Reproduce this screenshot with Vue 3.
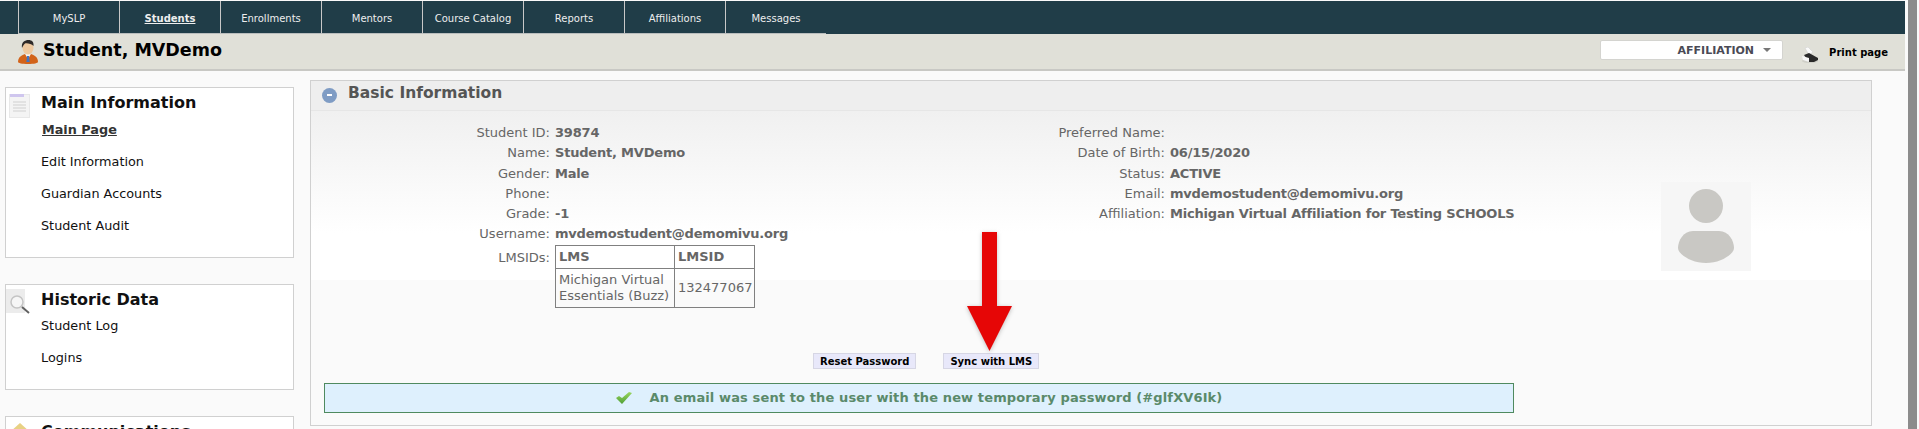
<template>
  <div class="shell">
    <div class="page">
      <nav class="topnav">
        <ul class="tabs">
          <li v-for="tab in tabs" :key="tab" class="tab" :class="{ current: tab === 'Students' }">{{ tab }}</li>
        </ul>
      </nav>

      <header class="titlebar">
        <svg class="user-icon" width="22" height="24" viewBox="0 0 22 24">
          <path d="M1 22c0-5 4-7 7-8h6c3 1 7 3 7 8 0 1-4 2-10 2S1 23 1 22z" fill="#d2631a" />
          <path d="M8 14h6l-3 5z" fill="#f4f4f4" />
          <path d="M10 16h2l.6 6h-3.200z" fill="#3f74c4" />
          <ellipse cx="11" cy="8" rx="5.500" ry="6.500" fill="#eec9a0" />
          <path d="M5 8C4 2 8 0 11.500 0S17 2 16.500 6c-2-2-6-3-8.500-2.500C7 4 6 6 5 8z" fill="#2e2a28" />
        </svg>
        <h1 class="student-name">Student, MVDemo</h1>
        <div class="affiliation-select">
          <span>AFFILIATION</span>
          <i class="caret"></i>
        </div>
        <svg class="print-icon" width="18" height="16" viewBox="0 0 18 16">
          <ellipse cx="9" cy="14" rx="8" ry="2" fill="#cfcfc8" />
          <path d="M4 1l3-1 5 5-4 3z" fill="#fafafa" stroke="#cccccc" stroke-width=".5" />
          <path d="M3 8l5-2 9 5v2l-4 2H8z" fill="#2a2a2a" />
          <path d="M1 9l7 2v4l-6-2z" fill="#f6f6f6" />
        </svg>
        <span class="print-label">Print page</span>
      </header>

      <div class="content">
        <aside class="sidebar">
          <section class="side-box main-box">
            <svg class="side-icon doc" width="21" height="24" viewBox="0 0 21 24">
              <rect x=".5" y=".5" width="20" height="23" fill="#f4f4f4" stroke="#e8e8e8" />
              <rect x="1" y="0" width="14" height="3" fill="#cfc6ee" />
              <path d="M4 8h13M4 11h13M4 14h13M4 17h13" stroke="#dcdcdc" stroke-width="1.500" />
            </svg>
            <h2>Main Information</h2>
            <a class="side-link active">Main Page</a>
            <a class="side-link">Edit Information</a>
            <a class="side-link">Guardian Accounts</a>
            <a class="side-link">Student Audit</a>
          </section>

          <section class="side-box history-box">
            <svg class="side-icon mag" width="25" height="25" viewBox="0 0 25 25">
              <rect x="0" y="0" width="19" height="24" fill="#ececec" />
              <circle cx="11" cy="13" r="6" fill="#f6f6f6" stroke="#c4c4c4" stroke-width="1.500" />
              <path d="M16 18l7 6" stroke="#606060" stroke-width="2" />
            </svg>
            <h2>Historic Data</h2>
            <a class="side-link">Student Log</a>
            <a class="side-link">Logins</a>
          </section>

          <section class="side-box comm-box">
            <svg class="side-icon env" width="22" height="18" viewBox="0 0 22 18">
              <path d="M1 10L11 1l10 9v8H1z" fill="#e8d184" />
            </svg>
            <h2>Communications</h2>
          </section>
        </aside>

        <main class="panel">
          <div class="panel-head">
            <span class="collapse"><b></b></span>
            <h3>Basic Information</h3>
          </div>

          <div class="info">
            <dl class="col">
              <template v-for="row in leftRows" :key="row.label">
                <dt>{{ row.label }}:</dt>
                <dd>{{ row.value }}</dd>
              </template>
              <dt class="lms-label">LMSIDs:</dt>
              <dd>
                <table class="lms">
                  <colgroup>
                    <col class="lms-name" />
                    <col class="lms-id" />
                  </colgroup>
                  <tr><th>LMS</th><th>LMSID</th></tr>
                  <tr><td>Michigan Virtual<br />Essentials (Buzz)</td><td>132477067</td></tr>
                </table>
              </dd>
            </dl>
            <dl class="col right">
              <template v-for="row in rightRows" :key="row.label">
                <dt>{{ row.label }}:</dt>
                <dd>{{ row.value }}</dd>
              </template>
            </dl>
            <div class="avatar">
              <svg width="90" height="89" viewBox="0 0 90 89">
                <circle cx="45" cy="24" r="17" fill="#c9c8c4" />
                <path d="M32 49h26c10 0 15 10 15 17 0 6-13 15-28 15S17 72 17 66c0-7 5-17 15-17z" fill="#c9c8c4" />
              </svg>
            </div>
          </div>

          <div class="actions">
            <button class="btn">Reset Password</button>
            <button class="btn">Sync with LMS</button>
          </div>

          <div class="notice">
            <svg width="16" height="13" viewBox="0 0 16 13">
              <defs>
                <linearGradient id="check-fill" x1="0" y1="0" x2="0" y2="1">
                  <stop offset="0" stop-color="#9ad65e" />
                  <stop offset="1" stop-color="#4f9f36" />
                </linearGradient>
              </defs>
              <path d="M0 7l3-2 3 2 7-6 3 1-10 11z" fill="url(#check-fill)" />
            </svg>
            <span>An email was sent to the user with the new temporary password (#glfXV6Ik)</span>
          </div>

          <svg class="arrow" width="47" height="122" viewBox="0 0 47 122">
            <path d="M15 0h15v74h15L22.500 119 0 74h15z" fill="#e60606" />
          </svg>
        </main>
      </div>
    </div>
    <div class="scrollbar"></div>
  </div>
</template>

<script setup>
const tabs = ['MySLP', 'Students', 'Enrollments', 'Mentors', 'Course Catalog', 'Reports', 'Affiliations', 'Messages']

const leftRows = [
  { label: 'Student ID', value: '39874' },
  { label: 'Name', value: 'Student, MVDemo' },
  { label: 'Gender', value: 'Male' },
  { label: 'Phone', value: '' },
  { label: 'Grade', value: '-1' },
  { label: 'Username', value: 'mvdemostudent@demomivu.org' }
]

const rightRows = [
  { label: 'Preferred Name', value: '' },
  { label: 'Date of Birth', value: '06/15/2020' },
  { label: 'Status', value: 'ACTIVE' },
  { label: 'Email', value: 'mvdemostudent@demomivu.org' },
  { label: 'Affiliation', value: 'Michigan Virtual Affiliation for Testing SCHOOLS' }
]
</script>

<style>
html, body {
  margin: 0;
  height: 429px;
  overflow: hidden;
  background: #fafafa;
}
</style>

<style scoped>
.shell {
  display: flex;
  height: 429px;
  overflow: hidden;
  font-family: "DejaVu Sans", Verdana, sans-serif;
  font-size: 12px;
}

.page {
  width: 1908px;
  flex: none;
}

.scrollbar {
  width: 9px;
  flex: none;
  background: #8c8c8c;
}

.topnav {
  width: 1905px;
  height: 33px;
  margin-top: 1px;
  background: #203d48;
}

.tabs {
  display: flex;
  margin: 0;
  padding: 0 0 0 18px;
  list-style: none;
}

.tab {
  width: 100px;
  height: 32px;
  border-left: 1px solid #c8c8c8;
  border-bottom: 1px solid #b9bdbd;
  color: #eee;
  font-size: 10px;
  line-height: 35px;
  text-align: center;
}

.tab.current {
  font-weight: bold;
  text-decoration: underline;
}

.titlebar {
  display: flex;
  align-items: center;
  width: 1905px;
  height: 37px;
  padding-left: 17px;
  box-sizing: border-box;
  background: #e0e0d8;
  border-bottom: 2px solid #c8c8c4;
}

.user-icon {
  flex: none;
}

.student-name {
  margin: 0 0 4px 4px;
  font-size: 17.500px;
  font-weight: bold;
  color: #000;
}

.affiliation-select {
  display: flex;
  align-items: center;
  justify-content: flex-end;
  width: 183px;
  height: 20px;
  margin: 0 0 3px auto;
  padding-right: 11px;
  box-sizing: border-box;
  background: #fff;
  border: 1px solid #d4d4d0;
  border-radius: 2px;
  color: #4a4a55;
  font-size: 11px;
  font-weight: bold;
}

.caret {
  width: 0;
  height: 0;
  margin-left: 9px;
  border-left: 4px solid transparent;
  border-right: 4px solid transparent;
  border-top: 4px solid #777;
}

.print-icon {
  flex: none;
  margin: 6px 0 0 18px;
}

.print-label {
  margin: 1px 17px 0 10px;
  font-size: 10px;
  font-weight: bold;
  color: #000;
}

.content {
  display: flex;
  align-items: flex-start;
}

.sidebar {
  width: 289px;
  flex: none;
  margin: 16px 0 0 5px;
}

.side-box {
  position: relative;
  box-sizing: border-box;
  padding-left: 35px;
  background: #fff;
  border: 1px solid #d0d0d0;
  margin-bottom: 26px;
}

.main-box {
  height: 171px;
}

.history-box {
  height: 106px;
}

.comm-box {
  height: 60px;
}

.side-box h2 {
  margin: 0;
  font-size: 16px;
  line-height: 24px;
  padding-top: 3px;
  color: #111;
}

.history-box h2 {
  padding-top: 4px;
  line-height: 22px;
  margin-bottom: -1px;
}

.side-link {
  display: block;
  height: 32px;
  line-height: 32px;
  font-size: 12.800px;
  color: #111;
}

.side-link.active {
  height: 24px;
  line-height: 24px;
  margin: 3px 0 4px 1px;
  font-weight: bold;
  text-decoration: underline;
  color: #333;
}

.side-icon {
  position: absolute;
}

.side-icon.doc {
  left: 3px;
  top: 6px;
}

.side-icon.mag {
  left: 0;
  top: 4px;
}

.side-icon.env {
  left: 3px;
  top: 5px;
}

.panel {
  position: relative;
  width: 1562px;
  height: 346px;
  flex: none;
  box-sizing: border-box;
  margin: 9px 0 0 16px;
  border: 1px solid #d0d0d0;
  color: #666;
}

.panel-head {
  display: flex;
  align-items: center;
  height: 29px;
  background: #eee;
  border-bottom: 1px solid #e6e6e6;
}

.collapse {
  display: flex;
  align-items: center;
  justify-content: center;
  width: 15px;
  height: 15px;
  margin: 0 0 1px 11px;
  border-radius: 50%;
  background: #7f9cc4;
}

.collapse b {
  width: 5px;
  height: 2px;
  background: #fff;
}

.panel-head h3 {
  margin: 0 0 6px 11px;
  font-size: 15.500px;
  font-weight: bold;
  color: #555;
}

.info {
  display: flex;
  height: 169px;
  padding-top: 14px;
  box-sizing: border-box;
  background: linear-gradient(#f0f0f0, #fff 72%);
  font-size: 13px;
}

.col {
  display: grid;
  grid-template-columns: 239px 1fr;
  grid-auto-rows: 20.300px;
  align-content: start;
  column-gap: 5px;
  width: 615px;
  margin: 0;
}

.col.right {
  width: 735px;
}

.col dt {
  text-align: right;
}

.col dd {
  margin: 0;
  font-weight: bold;
  letter-spacing: -0.2px;
}

.col dt.lms-label {
  padding-top: 3px;
}

.lms {
  width: 199px;
  table-layout: fixed;
  border-collapse: collapse;
  margin-top: -2px;
  font-size: 13px;
  font-weight: normal;
  line-height: 16px;
  letter-spacing: 0;
}

.lms-name {
  width: 119px;
}

.lms-id {
  width: 80px;
}

.lms th,
.lms td {
  border: 1px solid #808080;
  padding: 3px;
  text-align: left;
  white-space: nowrap;
}

.lms th {
  font-weight: bold;
}

.avatar {
  width: 90px;
  height: 89px;
  margin-top: 57px;
  background: #f6f6f6;
}

.actions {
  display: flex;
  gap: 27px;
  padding: 73px 0 0 502px;
}

.btn {
  height: 16px;
  padding: 0 6px;
  border: 1px solid #d6d6e4;
  background: #e8e8fa;
  color: #000;
  font-family: inherit;
  font-size: 10px;
  font-weight: bold;
}

.notice {
  display: flex;
  align-items: center;
  justify-content: center;
  gap: 18px;
  width: 1190px;
  height: 30px;
  padding-bottom: 2px;
  box-sizing: border-box;
  margin: 14px 0 0 13px;
  background: #def0fd;
  border: 1px solid #4f8a5f;
  color: #5a8a6a;
  font-size: 13px;
  font-weight: bold;
  letter-spacing: 0.12px;
}

.arrow {
  position: absolute;
  left: 656px;
  top: 151px;
  filter: drop-shadow(0 1px 2px rgba(0, 0, 0, 0.25));
}
</style>
